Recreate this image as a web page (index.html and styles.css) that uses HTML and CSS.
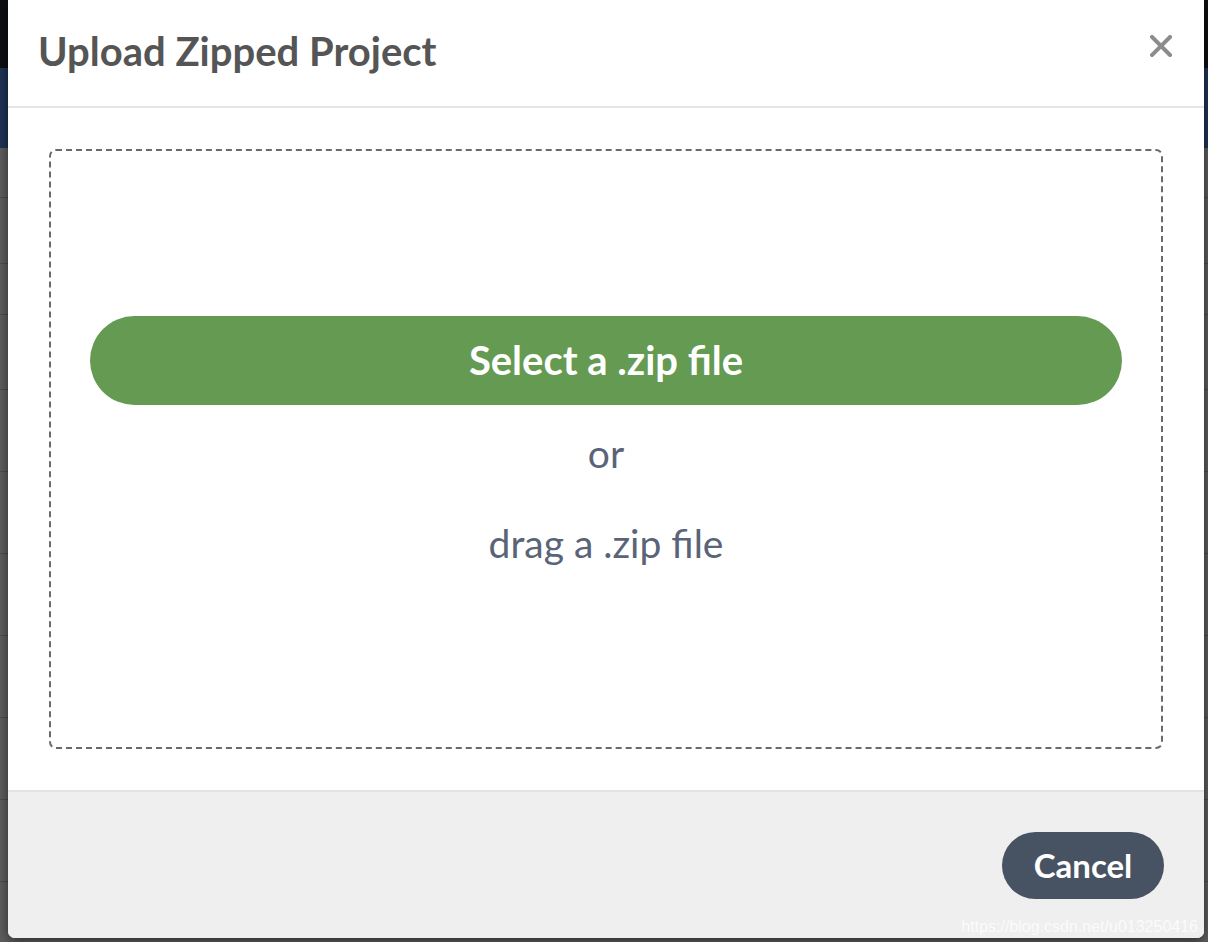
FILE: index.html
```html
<!DOCTYPE html>
<html lang="en">
<head>
  <meta charset="UTF-8" />
  <meta name="viewport" content="width=device-width, initial-scale=1" />
  <title>Upload Zipped Project</title>
  <link rel="stylesheet" href="styles.css">
</head>
<body>
  <div class="page">
    <div class="topbar"></div>
    <div class="navbar"></div>
    <div class="list">
      <div class="row r1"></div>
      <div class="row r2"></div>
      <div class="row r3"></div>
      <div class="row r4"></div>
      <div class="row"></div>
      <div class="row"></div>
      <div class="row"></div>
      <div class="row"></div>
      <div class="row"></div>
      <div class="row"></div>
    </div>
  </div>

  <div class="modal">
    <div class="modal-header">
      <h3 class="modal-title">Upload Zipped Project</h3>
      <button class="close" aria-label="Close">
        <svg width="22" height="22" viewBox="0 0 22 22">
          <path d="M2 2 L20 20 M20 2 L2 20" stroke="#8c8c8c" stroke-width="4" stroke-linecap="square" fill="none"/>
        </svg>
      </button>
    </div>
    <div class="modal-body">
      <div class="dropzone">
        <button class="btn-select">Select a .zip file</button>
        <div class="or">or</div>
        <div class="drag">drag a .zip file</div>
      </div>
    </div>
    <div class="modal-footer">
      <button class="btn-cancel">Cancel</button>
    </div>
  </div>

  <div class="watermark">https://blog.csdn.net/u013250416</div>
</body>
</html>
```

FILE: styles.css
```css
html, body {
  margin: 0;
  padding: 0;
  height: 100%;
  overflow: hidden;
  font-family: Lato, "Open Sans", sans-serif;
}
body {
  position: relative;
  background: #5d5d5d;
}
.page {
  display: flex;
  flex-direction: column;
  height: 100vh;
}
.topbar {
  height: 68px;
  background: #0e0f12;
}
.navbar {
  height: 80px;
  background: #1f3456;
}
.list {
  flex: 1;
  background: #5e5e5e;
}
.row {
  height: 82px;
  box-sizing: border-box;
  border-bottom: 1px solid #4c4c4c;
}
.r1 { height: 50px; }
.r2 { height: 66px; }
.r3 { height: 51px; }
.r4 { height: 75px; }
.modal {
  position: absolute;
  left: 8px;
  top: 0;
  width: 1196px;
  height: 938px;
  background: #fff;
  border-radius: 0 0 7px 7px;
  box-shadow: 0 3px 12px rgba(0, 0, 0, 0.55);
  display: flex;
  flex-direction: column;
  overflow: hidden;
}
.modal-header {
  height: 108px;
  box-sizing: border-box;
  border-bottom: 2px solid #e5e5e5;
  display: flex;
  align-items: center;
  justify-content: space-between;
  padding: 0 32px 4px 30px;
}
.modal-title {
  margin: 0;
  font-size: 40px;
  font-weight: 700;
  color: #555;
}
.close {
  background: none;
  border: none;
  padding: 0;
  margin-top: -10px;
  cursor: pointer;
  line-height: 0;
}
.modal-body {
  flex: 1;
  padding: 41px;
  display: flex;
}
.dropzone {
  flex: 1;
  border: 2px dashed #6a6a6a;
  border-radius: 7px;
  display: flex;
  flex-direction: column;
  align-items: stretch;
  justify-content: center;
  padding: 0 39px 18px;
  text-align: center;
}
.btn-select {
  height: 89px;
  border: none;
  border-radius: 45px;
  background: #649a52;
  color: #fff;
  font-family: Lato, sans-serif;
  font-weight: 700;
  font-size: 40px;
  cursor: pointer;
}
.or, .drag {
  color: #5a6478;
  font-size: 39px;
  line-height: 44px;
}
.or {
  margin-top: 26px;
}
.drag {
  margin-top: 46px;
}
.modal-footer {
  height: 148px;
  box-sizing: border-box;
  border-top: 2px solid #e3e3e3;
  background: #efefef;
  display: flex;
  align-items: center;
  justify-content: flex-end;
  padding: 0 40px;
}
.btn-cancel {
  width: 162px;
  height: 67px;
  border: none;
  border-radius: 34px;
  background: #475263;
  color: #fff;
  font-family: Lato, sans-serif;
  font-weight: 700;
  font-size: 33px;
  cursor: pointer;
}
.watermark {
  position: absolute;
  right: 10px;
  bottom: 6px;
  font-family: "Liberation Sans", Arial, sans-serif;
  font-size: 16px;
  color: rgba(255, 255, 255, 0.75);
}
```
